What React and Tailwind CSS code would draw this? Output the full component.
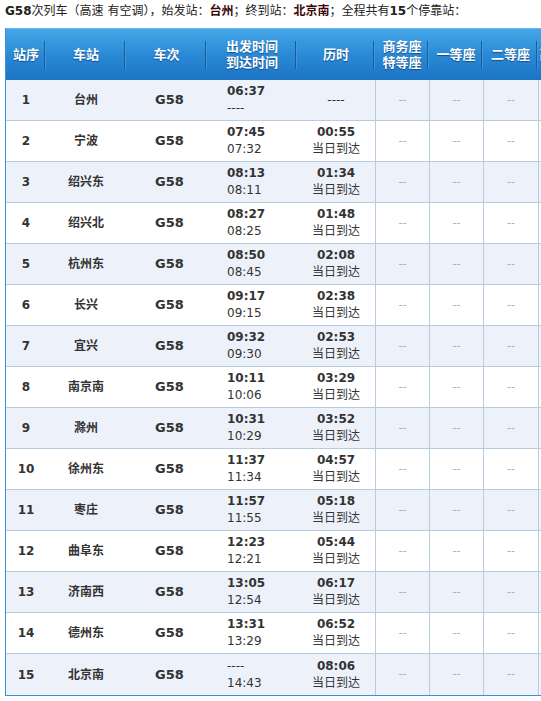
import React from "react";

const rows = [
  ["1", "台州", "06:37", "----", "----", null],
  ["2", "宁波", "07:45", "07:32", "00:55", "当日到达"],
  ["3", "绍兴东", "08:13", "08:11", "01:34", "当日到达"],
  ["4", "绍兴北", "08:27", "08:25", "01:48", "当日到达"],
  ["5", "杭州东", "08:50", "08:45", "02:08", "当日到达"],
  ["6", "长兴", "09:17", "09:15", "02:38", "当日到达"],
  ["7", "宜兴", "09:32", "09:30", "02:53", "当日到达"],
  ["8", "南京南", "10:11", "10:06", "03:29", "当日到达"],
  ["9", "滁州", "10:31", "10:29", "03:52", "当日到达"],
  ["10", "徐州东", "11:37", "11:34", "04:57", "当日到达"],
  ["11", "枣庄", "11:57", "11:55", "05:18", "当日到达"],
  ["12", "曲阜东", "12:23", "12:21", "05:44", "当日到达"],
  ["13", "济南西", "13:05", "12:54", "06:17", "当日到达"],
  ["14", "德州东", "13:31", "13:29", "06:52", "当日到达"],
  ["15", "北京南", "----", "14:43", "08:06", "当日到达"],
];

const grid =
  "grid grid-cols-[40px_80px_81px_90px_78px_54px_54px_55px_55px]";

function HeadCell({ children, divider = true }) {
  return (
    <div className="relative flex items-center justify-center text-center leading-[16px]">
      <span className="[text-shadow:0_1px_1px_rgba(0,40,90,0.6)]">{children}</span>
      {divider && (
        <div className="absolute right-0 top-[12px] bottom-[11px] w-[2px] border-l border-[#1b5c9c] bg-[#4aa3e3]/60" />
      )}
    </div>
  );
}

export default function App() {
  return (
    <div
      className="w-[541px] h-[701px] overflow-hidden bg-white text-[#333]"
      style={{ fontFamily: '"DejaVu Sans", "Noto Sans CJK SC", sans-serif' }}
    >
      <div className="h-[28px] pl-[5px] pt-[3px] text-[12px] leading-[16px] text-[#222] whitespace-nowrap">
        <b>G58</b>次列车（高速 有空调），始发站：<b className="text-[#3a0808]">台州</b>；终到站：
        <b className="text-[#3a0808]">北京南</b>；全程共有<b>15</b>个停靠站：
      </div>
      <div className="ml-[5px] w-[587px] border-l border-b border-[#3b8fd2]">
        <div
          className={`${grid} h-[52px] text-white text-[13px] font-bold bg-gradient-to-b from-[#45a6e8] via-[#2a8ad6] to-[#1b74c4] border-t border-[#6cb8ee]`}
        >
          <HeadCell>站序</HeadCell>
          <HeadCell>车站</HeadCell>
          <HeadCell>车次</HeadCell>
          <HeadCell>
            出发时间
            <br />
            到达时间
          </HeadCell>
          <HeadCell>历时</HeadCell>
          <HeadCell>
            商务座
            <br />
            特等座
          </HeadCell>
          <HeadCell>一等座</HeadCell>
          <HeadCell>二等座</HeadCell>
          <HeadCell divider={false}>高级软卧</HeadCell>
        </div>
        {rows.map((r, i) => (
          <div
            key={r[0]}
            className={`${grid} h-[41px] text-[12px] ${
              i % 2 === 0 ? "bg-[#edf2fa]" : "bg-white"
            } ${i < rows.length - 1 ? "border-b border-[#b6cde0]" : ""}`}
          >
            <div className="flex items-center justify-center font-bold">{r[0]}</div>
            <div className="flex items-center justify-center font-bold">{r[1]}</div>
            <div className="flex items-center justify-center pl-[6px] font-bold text-[13px]">G58</div>
            <div className="flex flex-col justify-center pl-[20px] leading-[17px]">
              <span className={r[2] === "----" ? "" : "font-bold"}>{r[2]}</span>
              <span>{r[3]}</span>
            </div>
            <div className="flex flex-col items-center justify-center leading-[17px]">
              {r[5] ? (
                <>
                  <span className="font-bold">{r[4]}</span>
                  <span>{r[5]}</span>
                </>
              ) : (
                <span>{r[4]}</span>
              )}
            </div>
            {[0, 1, 2].map((k) => (
              <div
                key={k}
                className="flex items-center justify-center border-l border-[#b6cde0] text-[#aaa] text-[11px]"
              >
                --
              </div>
            ))}
            <div className="border-l border-[#b6cde0]" />
          </div>
        ))}
      </div>
    </div>
  );
}
